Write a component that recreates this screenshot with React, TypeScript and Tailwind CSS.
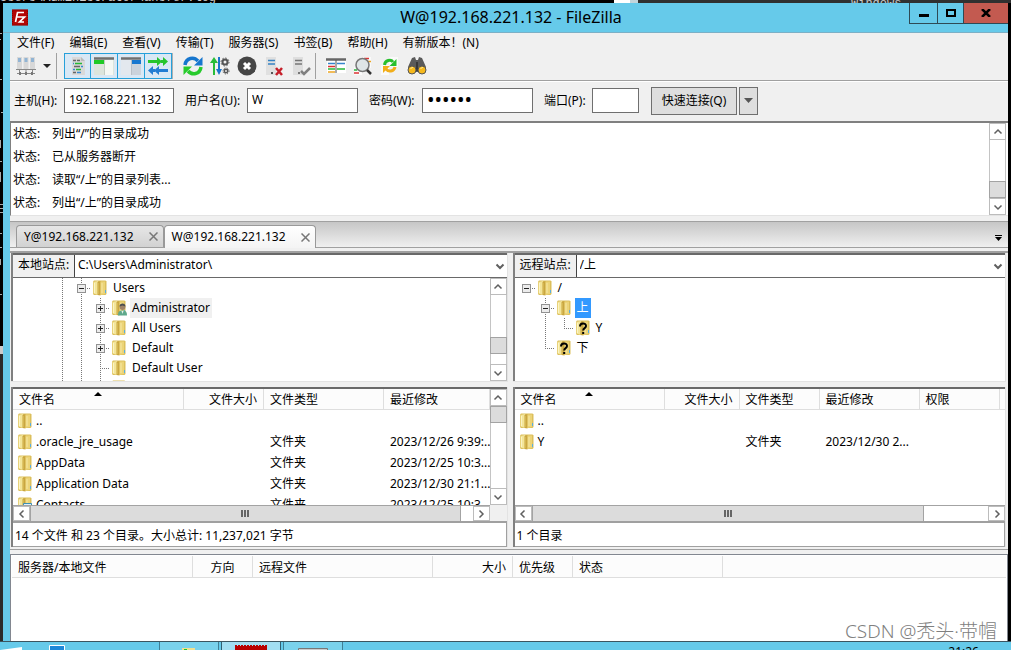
import { useState } from "react";
import type { ReactNode } from "react";
import clsx from "clsx";

const menus = ["文件(F)", "编辑(E)", "查看(V)", "传输(T)", "服务器(S)", "书签(B)", "帮助(H)", "有新版本！(N)"];

const logLines = ["列出“/”的目录成功", "已从服务器断开", "读取“/上”的目录列表...", "列出“/上”的目录成功"];

const sessions = ["Y@192.168.221.132", "W@192.168.221.132"];

type FolderKind = "plain" | "user" | "unknown" | "contact";
type GuideKind = "blank" | "line" | "tee" | "ell" | "plus" | "minus" | "minusRoot";

interface TreeRow {
  name: string;
  guides: GuideKind[];
  icon?: FolderKind;
  mark?: "soft" | "strong";
}

const localTree: TreeRow[] = [
  { name: "Users", guides: ["line", "minus"] },
  { name: "Administrator", guides: ["line", "line", "plus"], icon: "user", mark: "soft" },
  { name: "All Users", guides: ["line", "line", "plus"] },
  { name: "Default", guides: ["line", "line", "plus"] },
  { name: "Default User", guides: ["line", "line", "tee"] },
  { name: "", guides: ["line", "line", "plus"] },
];

const remoteTree: TreeRow[] = [
  { name: "/", guides: ["minusRoot"] },
  { name: "上", guides: ["blank", "minus"], mark: "strong" },
  { name: "Y", guides: ["blank", "line", "ell"], icon: "unknown" },
  { name: "下", guides: ["blank", "ell"], icon: "unknown" },
];

interface FileRow {
  name: string;
  type?: string;
  date?: string;
  icon?: FolderKind;
}

const localFiles: FileRow[] = [
  { name: ".." },
  { name: ".oracle_jre_usage", type: "文件夹", date: "2023/12/26 9:39:.." },
  { name: "AppData", type: "文件夹", date: "2023/12/25 10:3..." },
  { name: "Application Data", type: "文件夹", date: "2023/12/30 21:1..." },
  { name: "Contacts", type: "文件夹", date: "2023/12/25 10:3...", icon: "contact" },
];

const remoteFiles: FileRow[] = [{ name: ".." }, { name: "Y", type: "文件夹", date: "2023/12/30 2..." }];

function FolderIcon({ kind = "plain" }: { kind?: FolderKind }) {
  return (
    <svg width="16" height="16" viewBox="0 0 16 16" className="shrink-0">
      <path d="M0 1.5 1 .5h11.500l1 1V14l-1 1H1l-1-1z" fill="#dcbf5c" />
      <path d="M.5 2 5 1v14l-4.500-1.500z" fill="#f3e59a" />
      <path d="M1.500 3v10" stroke="#fbf4c4" />
      <path d="M4.500 2 7.500 1v14.500l-3-.5z" fill="#c9a640" />
      <path d="M5 3v11" stroke="#e0c565" />
      <path d="M7.500 1.500H12V14l-4.500 1z" fill="#ecd478" />
      <path d="M9 3v10" stroke="#f6e8a6" />
      <path d="M12.500 10v3" stroke="#58aee0" />
      {kind === "user" && (
        <g>
          <path d="M6 15.500c0-4 1.500-5 4.500-5s4.500 1 4.500 5z" fill="#5fa98c" />
          <circle cx="10.500" cy="7" r="2.900" fill="#a08468" />
          <path d="M7.500 6.500c0-4 6-4 6 0l-3-1z" fill="#4c4f50" />
          <path d="m9.500 11 1 3 1-3z" fill="#e8f2ee" />
        </g>
      )}
      {kind === "unknown" && (
        <g fill="none" stroke="#000" strokeWidth="2">
          <path d="M4 6.500C4 2.500 10 2.500 10 6c0 2.200-2.800 2-2.800 4.500" />
          <path d="M7.200 12v2" />
        </g>
      )}
      {kind === "contact" && <path d="M5.500 6.500h8v7h-8z" fill="#dff0f8" stroke="#3d8fb5" />}
    </svg>
  );
}

function Guide({ kind }: { kind: GuideKind }) {
  const box = kind === "plus" || kind.startsWith("minus");
  const up = kind !== "blank" && kind !== "minusRoot";
  const down = up && kind !== "ell";
  const right = kind !== "blank" && kind !== "line";
  return (
    <svg width="19" height="20" viewBox="0 0 19 20" className="shrink-0" shapeRendering="crispEdges">
      <g stroke="#777" strokeDasharray="1 1">
        {up && <path d="M9.500 0v10" />}
        {down && <path d="M9.500 10v10" />}
        {right && <path d="M9 10.500h10" />}
      </g>
      {box && <rect x="5.500" y="6.500" width="8" height="8" fill="#ececec" stroke="#929292" />}
      {box && <path d="M7 10.500h5" stroke="#222" />}
      {kind === "plus" && <path d="M9.500 8v5" stroke="#222" />}
    </svg>
  );
}

const chevrons = {
  up: "M1.500 6.500 5 3l3.500 3.500",
  down: "M1.500 3.500 5 7l3.500-3.500",
  left: "M6.500 1.500 3 5l3.500 3.500",
  right: "M3.500 1.500 7 5 3.500 8.500",
};

function Chevron({ dir, bold }: { dir: keyof typeof chevrons; bold?: boolean }) {
  return (
    <svg width="10" height="10" viewBox="0 0 10 10" fill="none" stroke="#606060" strokeWidth={bold ? 2 : 1.5}>
      <path d={chevrons[dir]} />
    </svg>
  );
}

interface ScrollBarProps {
  label: string;
  before: number;
  thumb: number;
  after: number;
}

function VScroll({ label, before, after }: Omit<ScrollBarProps, "thumb">) {
  const button = "-mx-px flex h-[17px] shrink-0 items-center justify-center border border-[#bcbcbc] bg-white";
  return (
    <div className="flex w-[17px] shrink-0 flex-col border-x border-[#c4c4c4] bg-white">
      <button aria-label={`${label} 向上`} className={button}>
        <Chevron dir="up" />
      </button>
      <div style={{ flexGrow: before }} />
      <div className="-mx-px h-[17px] shrink-0 border border-[#a3a3a3] bg-[#dcdcdc]" />
      <div style={{ flexGrow: after }} />
      <button aria-label={`${label} 向下`} className={button}>
        <Chevron dir="down" />
      </button>
    </div>
  );
}

function HScroll({ label, before, thumb, after }: ScrollBarProps) {
  const button = "flex w-[17px] shrink-0 items-center justify-center border border-[#bcbcbc] bg-white";
  return (
    <div className="flex h-4 min-w-0 flex-1 border-t border-[#a3a3a3] bg-white">
      <button aria-label={`${label} 向左`} className={button}>
        <Chevron dir="left" />
      </button>
      <div style={{ flexGrow: before }} />
      <div
        className="flex items-center justify-center gap-px border-x border-[#a3a3a3] bg-[#dcdcdc]"
        style={{ flexGrow: thumb }}
      >
        <span className="h-[7px] w-0.5 bg-[#666]" />
        <span className="h-[7px] w-0.5 bg-[#666]" />
        <span className="h-[7px] w-0.5 bg-[#666]" />
      </div>
      <div style={{ flexGrow: after }} />
      <button aria-label={`${label} 向右`} className={button}>
        <Chevron dir="right" />
      </button>
    </div>
  );
}

function TitleBar() {
  return (
    <header className="flex h-[30px] items-start border-b border-[#7cb0c6] pl-[9px]">
      <svg width="16" height="17" viewBox="0 0 16 17" className="mt-1.5">
        <rect width="16" height="16" y=".5" fill="#b30505" />
        <rect x=".5" y="1" width="15" height="15" fill="none" stroke="#7d0606" strokeDasharray="1 1" />
        <path d="M3.500 13 5.500 3.500H12M4.500 8h4M8 8h4.500L7.500 13H12" fill="none" stroke="#fff" strokeWidth="1.700" />
      </svg>
      <h1 className="min-w-0 flex-1 truncate pl-[85px] text-center text-base leading-[29px]">
        W@192.168.221.132 - FileZilla
      </h1>
      <div className="flex h-[21px] border-l border-b border-[#2e4a55]">
        <button aria-label="最小化" className="flex w-[27px] items-center justify-center">
          <span className="mt-1 h-[3px] w-2.5 bg-black" />
        </button>
        <button aria-label="最大化" className="flex w-[27px] items-center justify-center border-x border-[#2e4a55]">
          <span className="h-2 w-2.5 border-2 border-black" />
        </button>
        <button aria-label="关闭" className="flex w-11 items-center justify-center bg-[#c35a50]">
          <svg width="10" height="8" viewBox="0 0 10 8" stroke="#000" strokeWidth="2.500">
            <path d="m1 0 8 8M9 0 1 8" />
          </svg>
        </button>
      </div>
    </header>
  );
}

function ToolIcon({ children }: { children: ReactNode }) {
  return (
    <svg width="20" height="20" viewBox="0 0 20 20" fill="none">
      {children}
    </svg>
  );
}

function Tool({ label, on, children }: { label: string; on?: boolean; children: ReactNode }) {
  return (
    <button
      aria-label={label}
      className={clsx(
        "flex h-[26px] w-[27px] shrink-0 items-center justify-center",
        on && "border border-l-0 border-[#26a0da] bg-[#d9e8f5] first:border-l",
      )}
    >
      <ToolIcon>{children}</ToolIcon>
    </button>
  );
}

function Toolbar() {
  return (
    <div className="flex h-7 items-start border-b border-[#a0a0a0] pl-0.5">
      <Tool label="站点管理器">
        {[1, 7.5, 14].map((x) => (
          <g key={x}>
            <rect x={x} y="1" width="5" height="12" fill="#d8d8d8" />
            <path d={`M${x + 1} 3h3M${x + 1} 5h3`} stroke="#4a90d0" />
            <path d={`M${x + 2.5} 13v3`} stroke="#888" />
          </g>
        ))}
        <path d="M0 13.500h20M1 17.500h18" stroke="#888" />
        <path d="M3 16h2v3H3zm6 0h2v3H9zm6 0h2v3h-2z" fill="#777" />
      </Tool>
      <button aria-label="站点列表" className="flex h-[26px] w-4 items-center justify-center">
        <svg width="8" height="4" viewBox="0 0 8 4">
          <path d="M0 0h8L4 4z" fill="#222" />
        </svg>
      </button>
      <span className="ml-px h-[26px] w-px bg-[#a0a0a0]" />
      <div className="ml-[7px] flex border-r border-[#b0b0b0]">
        <Tool label="消息日志" on>
          <path d="M4 1h9l4 4v14H4z" fill="#d9d9d9" />
          <path d="m13 1 4 4h-4z" fill="#bbb" />
          <path d="M5 4.500h3M9 4.500h3M6 10.500h6M5 16.500h3" stroke="#666" strokeWidth="1.500" />
          <path d="M7 7.500h7M8 13.500h5" stroke="#25b935" strokeWidth="1.500" />
          <path d="M5 7.500h1M13 10.500h2M5 13.500h2M9 16.500h4" stroke="#3488ce" strokeWidth="1.500" />
        </Tool>
        <Tool label="本地目录树" on>
          <path d="M0 1h20v18H0z" fill="#dde5dc" />
          <path d="M11 4h8v15h-8z" fill="#f5f8f4" />
          <path d="M0 2.500h20" stroke="#707070" strokeWidth="2.500" />
          <path d="M0 4h10v4H0z" fill="#1fca26" />
          <path d="M10.500 4v15" stroke="#c3ccc3" />
        </Tool>
        <Tool label="远程目录树" on>
          <path d="M0 1h20v18H0z" fill="#e3e8ee" />
          <path d="M11 4h9v15h-9z" fill="#cbd3dc" />
          <path d="M0 2.500h20" stroke="#707070" strokeWidth="2.500" />
          <path d="M11 4h9v4h-9z" fill="#1878d0" />
          <path d="M10.500 4v15" stroke="#b8c0c8" />
        </Tool>
        <Tool label="传输队列" on>
          <path d="M0 4h9V1l5 4.500L9 10V7H0zM13 4h2V1l5 4.500-5 4.500V7h-2z" fill="#25c52d" />
          <path d="M20 13h-9v-3l-5 4.500 5 4.500v-3h9zM7 13H5v-3l-5 4.500L5 19v-3h2z" fill="#237dd3" />
        </Tool>
      </div>
      <div className="ml-1.5 flex">
        <Tool label="刷新">
          <path d="M2 9C3 1.500 11 .5 15 5" stroke="#1676ce" strokeWidth="3.500" />
          <path d="M19.500 1v8.500H11z" fill="#1676ce" />
          <path d="M18 11c-1 7.500-9 8.500-13 4" stroke="#28cb2d" strokeWidth="3.500" />
          <path d="M.5 19v-8.500H9z" fill="#28cb2d" />
        </Tool>
        <Tool label="处理队列">
          <path d="M3 19V7H0l4-6 4 6H5v12z" fill="#28bd38" />
          <path d="M8 1h2v12h2l-3 6-3-6h2z" fill="#1976cb" />
          <circle cx="15" cy="6" r="2.500" stroke="#555" strokeWidth="2" />
          <circle cx="15" cy="6" r="4" stroke="#555" strokeDasharray="1.500 1.600" />
          <circle cx="16" cy="15" r="1.700" stroke="#555" strokeWidth="1.500" />
          <circle cx="16" cy="15" r="3" stroke="#555" strokeDasharray="1.200 1.200" />
        </Tool>
        <Tool label="取消">
          <circle cx="10" cy="10" r="9.500" fill="#454545" />
          <path d="m7 7 6 6m0-6-6 6" stroke="#fff" strokeWidth="3" />
        </Tool>
        <Tool label="断开">
          <path d="M2 1h10v18H2z" fill="#e0e0e0" />
          <path d="M4 4.500h7M4 8h7" stroke="#3482c3" strokeWidth="1.500" />
          <path d="M7 16h2v2H7z" fill="#555" />
          <path d="m12 12 6 7m0-7-6 7" stroke="#c51f2a" strokeWidth="2.500" />
        </Tool>
        <Tool label="重新连接">
          <path d="M2 1h10v18H2z" fill="#dedede" />
          <path d="M4 4.500h7M4 8h7" stroke="#777" strokeWidth="1.500" />
          <path d="M7 16h2v2H7z" fill="#777" />
          <path d="m10 15 3 3 6-6" stroke="#808080" strokeWidth="2.500" />
        </Tool>
      </div>
      <span className="ml-px h-[26px] w-px bg-[#a0a0a0]" />
      <div className="ml-1.5 flex">
        <Tool label="过滤器">
          <path d="M1 3h19v14H1z" fill="#fff" />
          <path d="M0 3.500h20" stroke="#666" strokeWidth="2.500" />
          <path d="M2 7.500h7M11 7.500h8" stroke="#3785cc" strokeWidth="1.500" />
          <path d="M2 10.500h7" stroke="#d33" strokeWidth="1.500" />
          <path d="M2 13h7M11 13h8" stroke="#29b83a" strokeWidth="1.500" />
          <path d="M2 16h7" stroke="#eda51f" strokeWidth="1.500" />
          <path d="M10 4v13" stroke="#555" />
        </Tool>
        <Tool label="搜索">
          <path d="M10 1h8v11h-8zM1 11h8v8H1z" fill="#fafafa" />
          <path d="M11 2.500h5" stroke="#d33" strokeWidth="1.500" />
          <path d="M15 5.500h3" stroke="#eda51f" strokeWidth="1.500" />
          <path d="M1 14h3" stroke="#29b83a" strokeWidth="1.500" />
          <path d="M1 17h5" stroke="#d33" strokeWidth="1.500" />
          <circle cx="9.500" cy="9" r="6.500" fill="#dfe5e7" stroke="#777" strokeWidth="1.500" />
          <path d="m14 14 4 4" stroke="#333" strokeWidth="2.500" />
        </Tool>
        <Tool label="同步浏览">
          <path d="M9 1h9v10H9zM1 9h8v10H1z" fill="#fafafa" />
          <path d="M4.500 9C5 4 11 3 13 6" stroke="#28bf2d" strokeWidth="3" />
          <path d="M16.500 3v7h-7z" fill="#28bf2d" />
          <path d="M15 11c-1 5-7 5-9 2" stroke="#f2ae19" strokeWidth="3" />
          <path d="M3 17v-7h7z" fill="#f2ae19" />
        </Tool>
        <Tool label="目录比较">
          <path d="m5 2 3-1 1 3h2l1-3 3 1 4 9v5H1v-5z" fill="#5a5a5a" />
          <path d="M9 6h2v9H9z" fill="#383838" />
          <circle cx="5" cy="14" r="4" fill="#f5b81c" stroke="#555" />
          <circle cx="15" cy="14" r="4" fill="#f5b81c" stroke="#555" />
          <path d="M3.500 13c.5-1 1.500-1.500 2.500-1.500M13.500 13c.5-1 1.500-1.500 2.500-1.500" stroke="#fff0ae" />
        </Tool>
      </div>
    </div>
  );
}

function QuickConnect() {
  const input = "h-[25px] border border-[#6f6f6f] bg-white px-1 pb-0.5 outline-none";
  return (
    <form
      className="flex h-10 items-center border-t border-white pb-0.5 pl-1"
      onSubmit={(e) => e.preventDefault()}
    >
      <label htmlFor="host" className="w-[50px]">主机(H):</label>
      <input id="host" className={clsx(input, "w-[110px]")} defaultValue="192.168.221.132" />
      <label htmlFor="user" className="ml-[11px] w-[62px]">用户名(U):</label>
      <input id="user" className={clsx(input, "w-[111px]")} defaultValue="W" />
      <label htmlFor="pass" className="ml-[11px] w-[53px]">密码(W):</label>
      <input id="pass" type="password" className={clsx(input, "w-[111px] text-xl")} defaultValue="abcdef" />
      <label htmlFor="port" className="ml-[11px] w-12">端口(P):</label>
      <input id="port" className={clsx(input, "w-[47px]")} />
      <button className="ml-3 h-7 w-[86px] border border-[#6f6f6f] bg-[#dedede]">快速连接(Q)</button>
      <button
        type="button"
        aria-label="快速连接历史"
        className="ml-0.5 flex h-7 w-[19px] items-center justify-center border border-[#6f6f6f] bg-[#dedede]"
      >
        <svg width="9" height="5" viewBox="0 0 9 5">
          <path d="M0 0h9L4.500 5z" fill="#555" />
        </svg>
      </button>
    </form>
  );
}

function SessionTabs() {
  const [active, setActive] = useState(1);
  return (
    <div className="flex h-[27px] items-end border-y border-[#a0a0a0] bg-linear-to-b from-[#c6c6c6] to-[#f0f0f0] pl-1.5">
      {sessions.map((name, i) => (
        <div
          key={name}
          className={clsx(
            "flex h-[22px] items-center rounded-t-sm border border-b-0 border-[#999] pr-[5px]",
            i === active
              ? "-mb-px h-[23px] bg-linear-to-b from-white to-[#f4f4f4]"
              : "bg-linear-to-b from-[#e6e6e6] to-[#d2d2d2]",
          )}
        >
          <button className="h-full pr-[15px] pl-[7px]" onClick={() => setActive(i)}>
            {name}
          </button>
          <button aria-label={`关闭 ${name}`}>
            <svg width="9" height="9" viewBox="0 0 9 9" stroke="#777" strokeWidth="1.500">
              <path d="m.5.5 8 8m0-8-8 8" />
            </svg>
          </button>
        </div>
      ))}
      <button aria-label="标签列表" className="mr-1.5 mb-1.5 ml-auto">
        <svg width="7" height="6" viewBox="0 0 7 6">
          <path d="M0 0h7v1H0zM0 2h7L3.500 6z" fill="#000" />
        </svg>
      </button>
    </div>
  );
}

function SiteBar({ id, label, path }: { id: string; label: string; path: string }) {
  return (
    <div className="flex h-[25px] border-t-2 border-b border-[#696969]">
      <label htmlFor={id} className="w-[62px] shrink-0 border-r border-[#444] bg-[#f0f0f0] pl-[5px] leading-5">
        {label}
      </label>
      <div className="relative min-w-0 flex-1">
        <select id={id} className="h-full w-full appearance-none bg-white pb-0.5 pl-[3px] leading-5 outline-none">
          <option>{path}</option>
        </select>
        <span className="pointer-events-none absolute top-1.5 right-0.5">
          <Chevron dir="down" bold />
        </span>
      </div>
    </div>
  );
}

function Tree({ rows, className }: { rows: TreeRow[]; className: string }) {
  return (
    <ul className={clsx("min-w-0 flex-1 overflow-hidden", className)}>
      {rows.map((row) => (
        <li key={row.name} className="flex h-5 items-center">
          {row.guides.map((kind, i) => (
            <Guide key={i} kind={kind} />
          ))}
          <span className="ml-0.5">
            <FolderIcon kind={row.icon} />
          </span>
          <span
            className={clsx(
              "ml-0.5 px-0.5 leading-5",
              row.mark === "soft" && "bg-[#f0f0f0]",
              row.mark === "strong" && "bg-[#3399ff] text-white",
            )}
          >
            {row.name}
          </span>
        </li>
      ))}
    </ul>
  );
}

function SortMark() {
  return (
    <svg width="8" height="4" viewBox="0 0 8 4" className="absolute top-[3px] left-1/2 -translate-x-1/2">
      <path d="M4 0l4 4H0z" fill="#000" />
    </svg>
  );
}

const th = "relative border-r border-b border-[#dedede] bg-[#fcfcfc] px-1.5 pt-0.5 font-normal whitespace-nowrap";
const thLeft = clsx(th, "text-left");
const thRight = clsx(th, "text-right");

function FileTable({ files, permissions }: { files: FileRow[]; permissions?: boolean }) {
  return (
    <table className="w-full table-fixed border-separate border-spacing-0">
      <colgroup>
        <col className={permissions ? "w-[150px]" : "w-[171px]"} />
        <col className={permissions ? "w-[75px]" : "w-[80px]"} />
        <col className={permissions ? "w-[80px]" : "w-[120px]"} />
        <col className={permissions ? "w-[100px]" : undefined} />
        {permissions && <col className="w-[80px]" />}
        {permissions && <col />}
      </colgroup>
      <thead>
        <tr className="h-[21px]">
          <th className={thLeft}>
            文件名
            <SortMark />
          </th>
          <th className={thRight}>文件大小</th>
          <th className={thLeft}>文件类型</th>
          <th className={thLeft}>最近修改</th>
          {permissions && <th className={thLeft}>权限</th>}
          {permissions && <th className="border-b border-[#dedede] bg-[#fcfcfc]" />}
        </tr>
      </thead>
      <tbody>
        {files.map((file) => (
          <tr key={file.name} className="h-[21px]">
            <td>
              <div className="flex items-center gap-0.5 pl-[5px]">
                <FolderIcon kind={file.icon} />
                {file.name}
              </div>
            </td>
            <td />
            <td className="px-1.5">{file.type}</td>
            <td className="overflow-hidden pl-1.5 whitespace-nowrap">{file.date}</td>
            {permissions && <td />}
            {permissions && <td />}
          </tr>
        ))}
      </tbody>
    </table>
  );
}

function StatusLine({ children }: { children: ReactNode }) {
  return (
    <p className="h-[26px] truncate border-t-2 border-r border-b border-[#a0a0a0] bg-white pl-0.5 leading-[25px]">
      {children}
    </p>
  );
}

const frame = "border-r border-l-2 border-r-[#e3e3e3] border-l-[#808080] bg-white";

function LocalPane() {
  return (
    <section className="min-w-0">
      <div className={frame}>
        <SiteBar id="local-path" label="本地站点:" path="C:\Users\Administrator\" />
        <div className="flex h-[103px]">
          <Tree rows={localTree} className="pl-10" />
          <VScroll label="本地目录树" before={42} after={10} />
        </div>
      </div>
      <div className="h-1.5 border-t border-[#e3e3e3]" />
      <div className={frame}>
        <div className="flex h-[118px] border-t-2 border-[#696969]">
          <div className="min-w-0 flex-1 overflow-hidden">
            <FileTable files={localFiles} />
          </div>
          <VScroll label="本地文件" before={0} after={66} />
        </div>
        <div className="flex bg-[#f0f0f0]">
          <HScroll label="本地文件" before={0} thumb={430} after={12} />
          <span className="w-[17px]" />
        </div>
        <StatusLine>14 个文件 和 23 个目录。大小总计: 11,237,021 字节</StatusLine>
      </div>
    </section>
  );
}

function RemotePane() {
  return (
    <section className="min-w-0">
      <div className={frame}>
        <SiteBar id="remote-path" label="远程站点:" path="/上" />
        <div className="flex h-[103px]">
          <Tree rows={remoteTree} className="pl-0.5" />
        </div>
      </div>
      <div className="h-1.5 border-t border-[#e3e3e3]" />
      <div className={frame}>
        <div className="h-[118px] overflow-hidden border-t-2 border-[#696969]">
          <FileTable files={remoteFiles} permissions />
        </div>
        <div className="flex">
          <HScroll label="远程文件" before={0} thumb={391} after={65} />
        </div>
        <StatusLine>1 个目录</StatusLine>
      </div>
    </section>
  );
}

function Queue() {
  return (
    <section className="min-h-0 flex-1 border-x border-t border-[#828790] bg-white px-px pt-px">
      <table className="w-full table-fixed border-separate border-spacing-0">
        <colgroup>
          <col className="w-[181px]" />
          <col className="w-[60px]" />
          <col className="w-[180px]" />
          <col className="w-[80px]" />
          <col className="w-[60px]" />
          <col className="w-[150px]" />
          <col />
        </colgroup>
        <thead>
          <tr className="h-[22px]">
            <th className={thLeft}>服务器/本地文件</th>
            <th className={clsx(th, "text-center")}>方向</th>
            <th className={thLeft}>远程文件</th>
            <th className={thRight}>大小</th>
            <th className={thLeft}>优先级</th>
            <th className={thLeft}>状态</th>
            <th className="border-b border-[#dedede] bg-[#fcfcfc]" />
          </tr>
        </thead>
      </table>
    </section>
  );
}

function Taskbar() {
  return (
    <footer className="flex h-[9px] shrink-0 items-start overflow-hidden border-t border-[#3c5560] bg-[#66caea]">
      <svg width="24" height="8" viewBox="0 0 24 8">
        <path d="M0 8 22 5v3z" fill="#fff" />
      </svg>
      <svg width="16" height="8" viewBox="0 0 16 8" className="ml-[25px]">
        <path d="M.5 8V3.500h15V8" fill="#1e88d8" stroke="#fff" />
      </svg>
      <button
        aria-label="文件资源管理器"
        className="ml-[94px] flex h-full w-[60px] justify-center border-x border-[#3f7f96] bg-[#7ad2ec]"
      >
        <svg width="16" height="8" viewBox="0 0 16 8">
          <path d="M1 8V6h13v2z" fill="#f0e090" />
          <path d="M3 7h3v1H3z" fill="#1bc52b" />
        </svg>
      </button>
      <button
        aria-label="FileZilla"
        className="ml-0.5 flex h-full w-[60px] justify-center border-x border-[#2f6073] bg-[#a2def2]"
      >
        <svg width="32" height="8" viewBox="0 0 32 8">
          <path d="M0 8V4h32v4z" fill="#b80000" />
          <path d="M0 3.500h32" stroke="#b80000" strokeDasharray="2 1" />
        </svg>
      </button>
      <button
        aria-label="服务器管理器"
        className="ml-0.5 flex h-full w-[60px] justify-center border-x border-[#3f7f96] bg-[#7ad2ec]"
      >
        <svg width="30" height="8" viewBox="0 0 30 8">
          <path d="M.5 8V6.500h29V8" fill="#ccc" stroke="#777" />
        </svg>
      </button>
      <time className="mr-8 ml-auto pt-0.5 leading-4">21:26</time>
    </footer>
  );
}

export default function App() {
  return (
    <div className="relative flex h-screen flex-col overflow-hidden bg-black font-['Noto_Sans','Noto_Sans_CJK_SC',sans-serif] text-xs text-black">
      {/* console window behind the client */}
      <div className="flex h-[3px] shrink-0 items-end overflow-hidden font-['Liberation_Mono',monospace] text-xs leading-[9px] text-[#ccc]">
        <span className="min-w-0 flex-1 whitespace-nowrap">Users\Administrator\ansfer.log</span>
        <span className="h-[3px] w-4 bg-white" />
        <span className="h-[3px] w-2 bg-[#c3d5dc]" />
        <span className="h-[3px] w-[373px] bg-[#303030] pl-[213px]">Windows</span>
      </div>

      <div className="flex min-h-0 flex-1">
        <div className="flex w-[3px] shrink-0 flex-col">
          <svg width="3" height="343" viewBox="0 0 3 343" stroke="#aaa" shapeRendering="crispEdges">
            <path d="M0 30h2M0 36h1M0 76h2M1 109h2M0 137v8M0 158h2M0 169v10M0 201h3M0 205h3M0 209h3M0 230h2M0 244h2M0 256v6M0 291h2" />
          </svg>
          <span className="h-2 bg-[#ccc]" />
          <span className="flex-1 bg-[#2b2b2b]" />
        </div>
        <div className="mr-[3px] flex min-w-0 flex-1 flex-col bg-[#66caea]">
          <TitleBar />
          <main className="ml-[7px] flex min-h-0 flex-1 flex-col bg-[#f0f0f0]">
            <nav className="flex h-5 items-center gap-[15px] pl-[7px] whitespace-nowrap">
              {menus.map((menu) => (
                <button key={menu}>{menu}</button>
              ))}
            </nav>
            <Toolbar />
            <QuickConnect />

            <section className="flex border-t-2 border-b border-l border-[#808080] border-b-[#e3e3e3] bg-white">
              <ul className="min-w-0 flex-1">
                {logLines.map((line) => (
                  <li key={line} className="flex h-[23px] items-center pb-0.5 pl-0.5">
                    <span className="w-[39px]">状态:</span>
                    {line}
                  </li>
                ))}
              </ul>
              <VScroll label="消息日志" before={43} after={0} />
              <span className="w-0.5" />
            </section>

            <div className="mt-[5px]">
              <SessionTabs />
            </div>
            <div className="mt-[3px] grid grid-cols-[496fr_493fr] gap-x-[5px] border-t-2 border-[#a0a0a0] pr-0.5 pl-px">
              <LocalPane />
              <RemotePane />
            </div>
            <div className="mt-0.5 mb-1 border-t border-[#a0a0a0]" />
            <Queue />
          </main>
        </div>
      </div>
      <Taskbar />

      <p className="pointer-events-none absolute right-3.5 bottom-[5px] text-[19px] leading-7 font-light text-[#808080]">
        CSDN @秃头·带帽
      </p>
    </div>
  );
}
